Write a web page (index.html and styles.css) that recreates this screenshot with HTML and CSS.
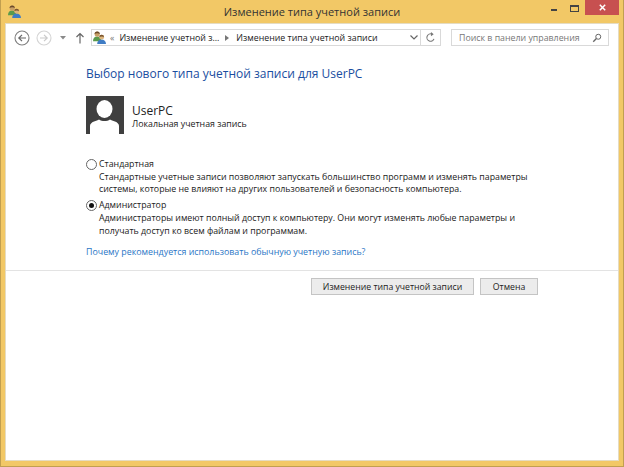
FILE: index.html
```html
<!DOCTYPE html>
<html lang="ru">
<head>
    <meta charset="UTF-8">
    <meta name="viewport" content="width=device-width, initial-scale=1.0">
    <title>Изменение типа учетной записи</title>
    <link rel="stylesheet" href="styles.css">
</head>
<body>
    <svg class="defs" width="0" height="0">
        <symbol id="users" viewBox="0 0 14 14">
            <path d="M0 11c0-3 1.500-5 4.500-5S9 8 9 11z" fill="#5a9a4c"/>
            <circle cx="4.500" cy="3.300" r="2.800" fill="#c9a066"/>
            <path d="M1.700 3.300a2.800 2.800 0 0 1 5.600 0C6 2.300 3.500 2 1.700 3.300z" fill="#6b4a2a"/>
            <path d="M4.500 14c0-3 2-4.800 4.700-4.800S14 11 14 14z" fill="#3f7cc4"/>
            <circle cx="9.300" cy="6.600" r="2.600" fill="#dcb57c"/>
            <path d="M6.700 6.600a2.600 2.600 0 0 1 5.200 0c-1.300-1-3.600-1-5.200 0z" fill="#7a5630"/>
        </symbol>
    </svg>

    <div class="window">
        <div class="titlebar">
            <svg class="title-icon"><use href="#users"/></svg>
            <div class="title">Изменение типа учетной записи</div>
            <div class="controls">
                <span class="ctl-min"></span>
                <span class="ctl-max"></span>
                <span class="ctl-close">
                    <svg width="7" height="7" viewBox="0 0 7 7"><path d="M.8.8l5.400 5.400M6.200.8L.8 6.200" stroke="#fff" stroke-width="1.500"/></svg>
                </span>
            </div>
        </div>

        <div class="content">
            <div class="toolbar">
                <svg class="nav-btn" viewBox="0 0 16 16" width="16" height="16">
                    <circle cx="8" cy="8" r="7" fill="#fff" stroke="#808080" stroke-width="1.100"/>
                    <path d="M12 8H5M8 4.800L4.800 8 8 11.200" fill="none" stroke="#666" stroke-width="1.200"/>
                </svg>
                <svg class="nav-btn" viewBox="0 0 16 16" width="16" height="16">
                    <circle cx="8" cy="8" r="7" fill="#fff" stroke="#d4d4d4" stroke-width="1.100"/>
                    <path d="M4 8h7M8 4.800L11.200 8 8 11.200" fill="none" stroke="#cacaca" stroke-width="1.200"/>
                </svg>
                <svg class="nav-drop" viewBox="0 0 6 4" width="6" height="4"><path d="M0 0h6L3 3.500z" fill="#8a8a8a"/></svg>
                <svg class="nav-up" viewBox="0 0 10 12" width="10" height="12">
                    <path d="M5 11.500V1.500M1.500 5l3.500-3.500L8.500 5" fill="none" stroke="#666" stroke-width="1.200"/>
                </svg>
                <div class="address">
                    <svg class="addr-icon"><use href="#users"/></svg>
                    <span class="crumb-more">«</span>
                    <span class="crumb">Изменение учетной з...</span>
                    <svg class="crumb-sep" viewBox="0 0 4 6" width="4" height="6"><path d="M0 0l4 3-4 3z" fill="#777"/></svg>
                    <span class="crumb">Изменение типа учетной записи</span>
                    <svg class="addr-drop" viewBox="0 0 8 5" width="8" height="5"><path d="M.5.500L4 4 7.500.500" fill="none" stroke="#666" stroke-width="1.200"/></svg>
                    <div class="refresh">
                        <svg viewBox="0 0 12 12" width="11" height="11"><path d="M9.800 7.500A4 4 0 1 1 7.500 2.300" fill="none" stroke="#777" stroke-width="1.200"/><path d="M6.500 0l3 2.500-3 2z" fill="#777"/></svg>
                    </div>
                </div>
                <div class="search">
                    <span>Поиск в панели управления</span>
                    <svg viewBox="0 0 12 12" width="10" height="10"><circle cx="7.500" cy="4.500" r="3" fill="none" stroke="#666" stroke-width="1.200"/><path d="M5.300 6.700L1.500 10.500" stroke="#666" stroke-width="1.600"/></svg>
                </div>
            </div>

            <div class="body">
                <h1 class="heading">Выбор нового типа учетной записи для UserPC</h1>

                <div class="user">
                    <div class="avatar">
                        <svg viewBox="0 0 38 38" width="38" height="38">
                            <ellipse cx="18.500" cy="13" rx="8" ry="9" fill="#fff"/>
                            <path d="M4 38v-8c0-2 1.500-3.500 4-4.500 2-.8 4-1 5-2 1.500 1 3.500 1.500 5.500 1.500s4-.5 5.500-1.500c1 1 3 1.200 5 2 2.500 1 4 2.500 4 4.500v8z" fill="#fff"/>
                        </svg>
                    </div>
                    <div class="user-info">
                        <div class="user-name">UserPC</div>
                        <div class="user-type">Локальная учетная запись</div>
                    </div>
                </div>

                <div class="option">
                    <div class="option-head">
                        <span class="radio"></span>
                        <span>Стандартная</span>
                    </div>
                    <p class="option-text">Стандартные учетные записи позволяют запускать большинство программ и изменять параметры<br>системы, которые не влияют на других пользователей и безопасность компьютера.</p>
                </div>

                <div class="option">
                    <div class="option-head">
                        <span class="radio radio-on"></span>
                        <span>Администратор</span>
                    </div>
                    <p class="option-text">Администраторы имеют полный доступ к компьютеру. Они могут изменять любые параметры и<br>получать доступ ко всем файлам и программам.</p>
                </div>

                <a class="why" href="#">Почему рекомендуется использовать обычную учетную запись?</a>
            </div>

            <div class="actions">
                <button class="btn btn-wide">Изменение типа учетной записи</button>
                <button class="btn btn-cancel">Отмена</button>
            </div>
        </div>
    </div>
</body>
</html>
```

FILE: styles.css
```css
html, body {
    margin: 0;
    height: 100%;
}
body {
    font-family: "Open Sans", "Noto Sans", sans-serif;
    font-size: 8.8px;
    color: #222;
    overflow: hidden;
}
.defs {
    display: block;
    height: 0;
}
.window {
    box-sizing: border-box;
    width: 624px;
    height: 467px;
    display: flex;
    flex-direction: column;
    background: #f2c866;
    border: 1px solid #c19f50;
    border-top: none;
    padding: 0 4px 5px 4px;
}
.titlebar {
    height: 23px;
    flex: none;
    display: flex;
    align-items: center;
    position: relative;
}
.title-icon {
    width: 13px;
    height: 13px;
    margin: 0 0 0 3px;
}
.title {
    position: absolute;
    left: 0;
    right: 0;
    text-align: center;
    font-size: 11px;
    color: #333;
}
.controls {
    margin-left: auto;
    display: flex;
    align-items: flex-start;
    align-self: flex-start;
}
.ctl-min {
    width: 6px;
    height: 2px;
    background: #444;
    margin: 9px 13px 0 0;
}
.ctl-max {
    box-sizing: border-box;
    width: 9px;
    height: 7px;
    border: 1px solid #444;
    border-top-width: 2px;
    margin: 5px 6px 0 0;
}
.ctl-close {
    width: 34px;
    height: 15px;
    background: #c75050;
    display: flex;
    align-items: center;
    justify-content: center;
}
.content {
    flex: 1;
    background: #fff;
    border: 1px solid #e5dcc2;
    display: flex;
    flex-direction: column;
}
.toolbar {
    display: flex;
    align-items: center;
    height: 27px;
    padding: 0 9px 0 8px;
}
.nav-btn {
    margin-right: 6px;
}
.nav-drop {
    margin: 0 9px 0 2px;
}
.nav-up {
    margin-right: 6px;
}
.address {
    box-sizing: border-box;
    width: 350px;
    height: 17px;
    border: 1px solid #d9d9d9;
    display: flex;
    align-items: center;
    padding-left: 1px;
    color: #222;
}
.addr-icon {
    width: 13px;
    height: 13px;
    flex: none;
}
.crumb-more {
    color: #777;
    margin: 0 5px 0 4px;
}
.crumb-sep {
    margin: 0 7px 0 6px;
    flex: none;
}
.addr-drop {
    margin-left: auto;
    margin-right: 2px;
}
.refresh {
    width: 19px;
    height: 100%;
    border-left: 1px solid #d9d9d9;
    display: flex;
    align-items: center;
    justify-content: center;
}
.search {
    box-sizing: border-box;
    width: 158px;
    height: 17px;
    margin-left: 10px;
    border: 1px solid #d9d9d9;
    display: flex;
    align-items: center;
    justify-content: space-between;
    padding: 0 6px 0 7px;
    color: #777;
}
.body {
    flex: none;
    height: 219px;
    padding: 16px 0 0 80px;
    box-sizing: border-box;
}
.heading {
    margin: 0;
    font-size: 12px;
    font-weight: 400;
    color: #1a4ea0;
    line-height: 14px;
}
.user {
    display: flex;
    align-items: center;
    margin-top: 15px;
}
.avatar {
    width: 38px;
    height: 38px;
    background: #3f3f3f;
    overflow: hidden;
}
.avatar svg {
    display: block;
}
.user-info {
    margin-left: 8px;
    padding-top: 3px;
}
.user-name {
    font-size: 12px;
    line-height: 15px;
}
.user-type {
    line-height: 12px;
}
.option {
    margin-bottom: 3.500px;
}
.user + .option {
    margin-top: 23.500px;
}
.option-head {
    display: flex;
    align-items: center;
    gap: 2px;
    line-height: 13px;
}
.radio {
    box-sizing: border-box;
    width: 11px;
    height: 11px;
    border: 1px solid #666;
    border-radius: 50%;
    background: #fff;
    display: flex;
    align-items: center;
    justify-content: center;
}
.radio-on::after {
    content: "";
    width: 5px;
    height: 5px;
    border-radius: 50%;
    background: #111;
}
.option-text {
    margin: 0 0 0 13px;
    line-height: 12.500px;
}
.why {
    display: block;
    color: #2a76c6;
    text-decoration: none;
    margin-top: 9px;
    line-height: 12px;
    font-size: 8.850px;
}
.actions {
    border-top: 1px solid #e3e3e3;
    display: flex;
    justify-content: flex-end;
    gap: 6px;
    padding: 7px 80px 0 0;
}
.btn {
    height: 17px;
    padding: 0;
    background: #ececec;
    border: 1px solid #c4c4c4;
    font-family: inherit;
    font-size: 8.700px;
    color: #222;
}
.btn-wide {
    width: 163px;
}
.btn-cancel {
    width: 58px;
}
```
